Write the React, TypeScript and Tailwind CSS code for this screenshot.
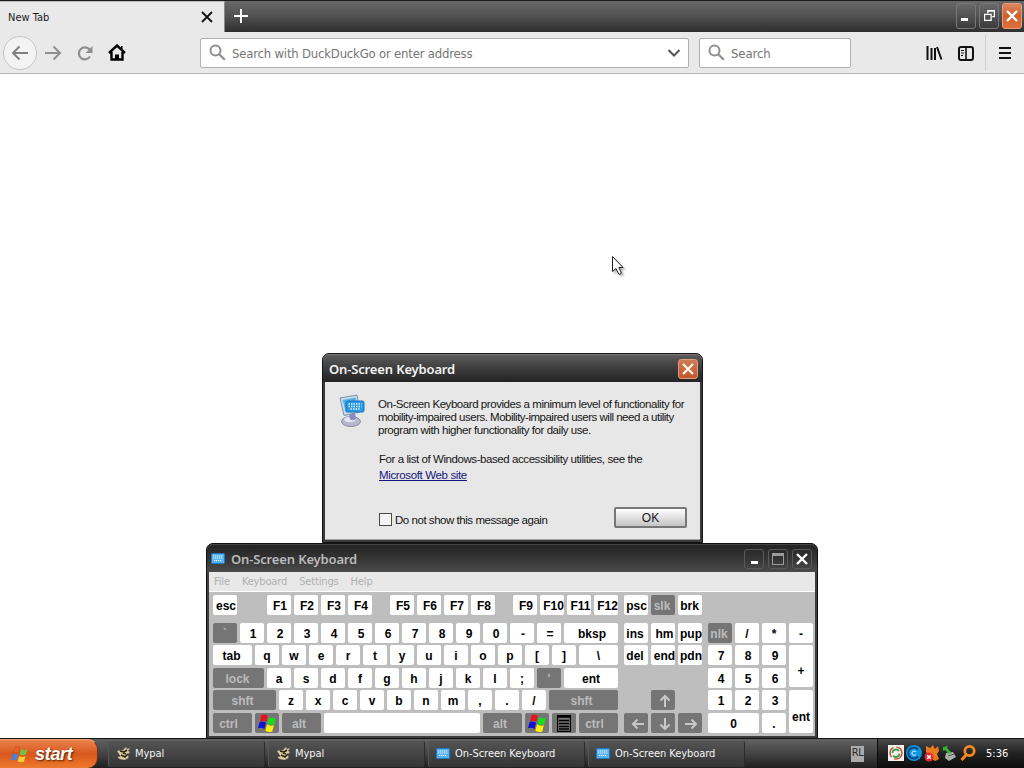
import type { ReactNode } from "react";
import { clsx } from "clsx";

const UI_FONT = "font-['DejaVu_Sans_Condensed','DejaVu_Sans',sans-serif]";
const TITLE_FONT = "font-['Noto_Sans','Open_Sans',sans-serif]";
const DIALOG_FONT = "font-['Liberation_Sans',Arial,sans-serif]";

interface KeyProps {
  children?: ReactNode;
  w?: string;
  h?: string;
  dark?: boolean;
  ml?: string;
  nudge?: string;
}

function Key({ children, w = "w-6", h = "h-5", dark, ml, nudge }: KeyProps) {
  return (
    <div
      className={clsx(
        "flex shrink-0 items-center justify-center overflow-hidden rounded-[2px] pt-[2px] text-[12px] leading-none font-bold whitespace-nowrap",
        dark ? "bg-[#757575] text-[#bcbcbc]" : "bg-white text-black",
        w,
        h,
        ml,
      )}
    >
      <span className={nudge}>{children}</span>
    </div>
  );
}

function Row({ children, className }: { children: ReactNode; className?: string }) {
  return <div className={clsx("flex h-5 gap-[3px]", className)}>{children}</div>;
}

function WindowsFlag() {
  return (
    <svg width="20" height="19" viewBox="0 0 20 19" className="mb-[2px] block">
      <path d="M4.500 1C6.500 0 8.500.300 10.800 1.800L9.300 8C7 6.500 5 6.500 3 7.300z" fill="#e8141c" />
      <path d="M12 3c2 1.400 4 1.600 6.800.8L17.300 10.300c-2.600.9-4.700.6-6.800-.8z" fill="#19dc19" />
      <path d="M2.600 8.200c2-1 4.200-.8 6.400.6L7.400 15C5.200 13.600 3.200 13.500 1 14.300z" fill="#1010d8" />
      <path d="M10 10.300c2.200 1.500 4.300 1.700 6.800.9L15.300 17.500c-2.500 1-4.700.7-6.900-.8z" fill="#fff200" />
    </svg>
  );
}

function Arrow({ rotate }: { rotate?: string }) {
  return (
    <svg width="14" height="14" viewBox="0 0 14 14" className={clsx("block", rotate)}>
      <path d="M13 7H2M6.500 2.500 2 7l4.500 4.500" fill="none" stroke="#c8c8c8" strokeWidth="2" />
    </svg>
  );
}

function KeyboardGlyph({ className }: { className?: string }) {
  return (
    <svg width="14" height="11" viewBox="0 0 14 11" className={className}>
      <rect x=".5" y=".5" width="13" height="10" rx="1" fill="#55b4ee" stroke="#1f78c4" />
      <path d="M2 3h10M2 5h10M3 7.500h8" stroke="#e4f6ff" strokeWidth="1.200" strokeDasharray="1.300 .7" />
    </svg>
  );
}

function MagnifierIcon() {
  return (
    <svg width="17" height="17" viewBox="0 0 17 17" className="shrink-0">
      <circle cx="6.500" cy="6.500" r="5" fill="none" stroke="#8f8f8f" strokeWidth="2" />
      <path d="m10.200 10.200 5.600 5.600" stroke="#8f8f8f" strokeWidth="2.200" />
    </svg>
  );
}

function Chrome({ children, className }: { children: ReactNode; className: string }) {
  return (
    <div className={clsx("flex items-center justify-center rounded-[3px] border", className)}>{children}</div>
  );
}

function CrossIcon({ size = 12, color = "#fff", width = 2.4 }: { size?: number; color?: string; width?: number }) {
  return (
    <svg width={size} height={size} viewBox="0 0 12 12">
      <path d="m1 1 10 10M11 1 1 11" stroke={color} strokeWidth={width} />
    </svg>
  );
}

function Browser() {
  return (
    <div className={clsx("flex flex-1 flex-col bg-white", UI_FONT)}>
      <div className="flex h-8 border-t border-[#1c1c1c] bg-linear-to-b from-[#696969] via-[#505050] to-[#2e2e2e]">
        <div className="flex w-[225px] items-center justify-between border-t border-r border-[#b9b9b9] border-r-[#8a8a8a] bg-[#e9e9e9] pr-[11px] pl-2">
          <span className="pt-[2px] text-[11px] text-[#1c1c1c]">New Tab</span>
          <CrossIcon color="#111" width={1.8} />
        </div>
        <svg width="16" height="16" viewBox="0 0 16 16" className="mt-[7px] ml-2">
          <path d="M8 1v14M1 8h14" stroke="#fff" strokeWidth="2" />
        </svg>
        <div className="mt-[2px] ml-auto flex h-[26px] gap-[3px] pr-[2px]">
          <Chrome className="w-5 border-[#777] bg-linear-to-b from-[#6a6a6a] to-[#3c3c3c]">
            <div className="mt-[6px] mr-1 h-[3px] w-[7px] bg-white" />
          </Chrome>
          <Chrome className="w-5 border-[#777] bg-linear-to-b from-[#6a6a6a] to-[#3c3c3c]">
            <svg width="11" height="11" viewBox="0 0 10 10" fill="none" stroke="#fff" className="mb-px">
              <path d="M.5 4v5.500h6V4M0 4h7M3.500 3V.5h6v5.500H7.500M3 1h7" strokeWidth="1.200" />
            </svg>
          </Chrome>
          <Chrome className="w-5 border-[#e79a78] bg-linear-to-b from-[#dc8660] via-[#cf5f2f] to-[#e0713a]">
            <CrossIcon size={12} />
          </Chrome>
        </div>
      </div>

      <div className="flex h-[42px] items-center border-b border-[#b5b5b5] bg-[#e9e9e9] pl-[3px]">
        <div className="flex size-[34px] items-center justify-center rounded-full border border-[#c4c4c4] bg-[#f3f3f3]">
          <svg width="18" height="16" viewBox="0 0 18 16" fill="none" stroke="#808080" strokeWidth="2">
            <path d="M17 8H2M8.500 1.500 2 8l6.500 6.500" />
          </svg>
        </div>
        <svg width="18" height="16" viewBox="0 0 18 16" fill="none" stroke="#8f8f8f" strokeWidth="2" className="ml-[7px]">
          <path d="M1 8h15M9.500 1.500 16 8l-6.500 6.500" />
        </svg>
        <svg width="16" height="16" viewBox="0 0 16 16" fill="none" stroke="#8f8f8f" strokeWidth="2.200" className="ml-[15px]">
          <path d="M13 11.500A6 6 0 1 1 12.500 4.500" />
          <path d="M15.500 1v7h-7z" fill="#8f8f8f" stroke="none" />
        </svg>
        <svg width="18" height="17" viewBox="0 0 18 17" className="ml-[15px]">
          <path d="M3.500 8v7.500h11V8M1 9l8-7.500L17 9" fill="none" stroke="#000" strokeWidth="2.400" />
          <path d="M7 16v-5.500h4V16z" fill="#000" />
          <path d="M13 2h1.500v3H13z" fill="#000" />
        </svg>
        <div className="ml-[74px] flex h-[30px] w-[489px] items-center rounded-[2px] border border-[#b0b0b0] bg-white pr-[7px] pl-2">
          <MagnifierIcon />
          <span className="ml-[6px] pt-[2px] text-[13px] tracking-[-0.2px] text-[#757575]">Search with DuckDuckGo or enter address</span>
          <svg width="14" height="10" viewBox="0 0 14 10" className="ml-auto">
            <path d="m1.500 2 5.500 5.500L12.500 2" fill="none" stroke="#555" strokeWidth="2" />
          </svg>
        </div>
        <div className="ml-[10px] flex h-[30px] w-[152px] items-center rounded-[2px] border border-[#b0b0b0] bg-white pl-2">
          <MagnifierIcon />
          <span className="ml-[6px] pt-[2px] text-[13px] tracking-[-0.1px] text-[#757575]">Search</span>
        </div>
        <svg width="17" height="16" viewBox="0 0 17 16" className="ml-[75px]" stroke="#111" strokeWidth="2">
          <path d="M1.500 1v14M5.500 3v12M9 3v12M11 2l4.500 12.500" />
        </svg>
        <svg width="16" height="15" viewBox="0 0 16 15" className="mt-px ml-[15px]" fill="none" stroke="#111">
          <rect x="1" y="1" width="14" height="13" rx="2" strokeWidth="2" />
          <path d="M8 1v13" strokeWidth="1.600" />
          <path d="M3 4.500h3M3 7h3M3 9.500h2" strokeWidth="1" />
        </svg>
        <div className="ml-[11px] h-9 w-px bg-[#cfcfcf]" />
        <div className="ml-[13px] flex w-[12px] flex-col gap-[3px]">
          <div className="h-[2px] bg-[#111]" />
          <div className="h-[2px] bg-[#111]" />
          <div className="h-[2px] bg-[#111]" />
        </div>
      </div>
    </div>
  );
}

function Dialog() {
  return (
    <div className="absolute top-[353px] left-[322px] flex h-[190px] w-[381px] flex-col rounded-t-[7px] border border-[#151515] bg-[#3b3b3b]">
      <div className="flex h-[28px] items-center justify-between rounded-t-[6px] border-t border-[#777] bg-linear-to-b from-[#5c5c5c] via-[#3d3d3d] to-[#232323] pr-1 pl-[6px]">
        <span className={clsx("pt-[2px] text-[13px] font-semibold tracking-[-0.15px] text-[#f2f2f2]", TITLE_FONT)}>On-Screen Keyboard</span>
        <Chrome className="h-5 w-5 border-[#e39b7c] bg-linear-to-b from-[#cf7a56] to-[#c2572c]">
          <CrossIcon color="#fff6e6" />
        </Chrome>
      </div>
      <div className={clsx("mx-[2px] mb-[2px] flex-1 border-b border-[#a0a0a0] bg-[#e7e7e7] pt-[16px] text-[11.5px] leading-[13px] text-[#151515]", DIALOG_FONT)}>
        <div className="flex">
          <svg width="30" height="34" viewBox="0 0 30 34" className="mt-[-4px] ml-[14px]">
            <ellipse cx="12" cy="27.500" rx="9.500" ry="5" fill="#b9b7cf" stroke="#8b89a8" />
            <ellipse cx="11" cy="25.500" rx="6" ry="2.800" fill="#e6e4f2" />
            <path d="m10 20 6-1 1 6c-2 1.500-4 1.500-6 .5z" fill="#8d8bc0" />
            <path d="m1 4 17-3 3 17-16 3.500z" fill="#c9dcea" stroke="#7893ab" />
            <path d="m3.500 6 13-2.500L19 16 7 18.500z" fill="#57aeea" />
            <rect x="7" y="7" width="18" height="11" rx="1.500" fill="#2b9ae6" stroke="#1375c0" />
            <path d="M9.500 10h13M9.500 12.500h13M11.500 15h9" stroke="#d9f3ff" strokeWidth="1.400" strokeDasharray="1.500 1" />
          </svg>
          <div className="ml-[9px] whitespace-nowrap">
            <p className="tracking-[-0.44px]">On-Screen Keyboard provides a minimum level of functionality for</p>
            <p className="tracking-[-0.5px]">mobility-impaired users. Mobility-impaired users will need a utility</p>
            <p className="tracking-[-0.44px]">program with higher functionality for daily use.</p>
            <p className="mt-4 ml-px tracking-[-0.43px]">For a list of Windows-based accessibility utilities, see the</p>
            <p className="mt-[3px] ml-px tracking-[-0.36px] text-[#14147c] underline">Microsoft Web site</p>
          </div>
        </div>
        <div className="mt-[25px] flex items-center pr-[13px] pl-[54px]">
          <div className="mt-1 size-[13px] border border-[#4a4a4a] bg-[#f4f4f4]" />
          <span className="mt-[6px] ml-[3px] tracking-[-0.46px]">Do not show this message again</span>
          <div className="ml-auto flex h-[21px] w-[73px] items-center justify-center rounded-[2px] border-2 border-[#777] bg-linear-to-b from-white to-[#c4c4c4] pt-px text-[12px]">OK</div>
        </div>
      </div>
    </div>
  );
}

function OnScreenKeyboard() {
  return (
    <div className="absolute top-[543px] left-[206px] flex h-[196px] w-[612px] flex-col rounded-t-[7px] border border-[#111] bg-[#3d3d3d]">
      <div className="flex h-[28px] items-center rounded-t-[6px] border-t border-[#444] bg-linear-to-b from-[#242424] via-[#343434] to-[#4b4b4b] pr-[5px] pl-1">
        <KeyboardGlyph />
        <span className={clsx("ml-[6px] pt-[2px] text-[13px] font-semibold tracking-[-0.15px] text-[#b9b9b9]", TITLE_FONT)}>On-Screen Keyboard</span>
        <div className="ml-auto flex gap-1">
          <Chrome className="h-5 w-5 border-[#595959]">
            <div className="mt-2 h-[3px] w-[7px] bg-white" />
          </Chrome>
          <Chrome className="h-5 w-5 border-[#595959]">
            <div className="h-[12px] w-[12px] border border-t-[3px] border-[#9b9b9b]" />
          </Chrome>
          <Chrome className="h-5 w-5 border-[#595959]">
            <CrossIcon />
          </Chrome>
        </div>
      </div>
      <div className={clsx("mx-[2px] flex h-5 items-center gap-3 border-b border-white bg-[#e8e8e8] pt-[2px] pl-[5px] text-[11px] tracking-[-0.15px] text-[#b0b0b0]", UI_FONT)}>
        <span>File</span>
        <span>Keyboard</span>
        <span>Settings</span>
        <span>Help</span>
      </div>

      <div className={clsx("mx-[2px] flex h-[144px] bg-[#bebebe] pt-[3px] pl-1", DIALOG_FONT)}>
        <div className="w-[405px]">
          <Row>
            <Key nudge="ml-[2px]">esc</Key>
            <Key ml="ml-[27px]" nudge="ml-[2px]">F1</Key>
            <Key nudge="ml-[2px]">F2</Key>
            <Key nudge="ml-[2px]">F3</Key>
            <Key nudge="ml-[2px]">F4</Key>
            <Key ml="ml-[15px]" nudge="ml-[2px]">F5</Key>
            <Key nudge="ml-[2px]">F6</Key>
            <Key nudge="ml-[2px]">F7</Key>
            <Key nudge="ml-[2px]">F8</Key>
            <Key ml="ml-[15px]" nudge="ml-[2px]">F9</Key>
            <Key nudge="ml-[3px]">F10</Key>
            <Key nudge="ml-[3px]">F11</Key>
            <Key nudge="ml-[3px]">F12</Key>
          </Row>
          <Row className="mt-2">
            <Key dark>`</Key>
            {["1", "2", "3", "4", "5", "6", "7", "8", "9", "0", "-", "="].map((k) => (
              <Key key={k} nudge="ml-[2px]">{k}</Key>
            ))}
            <Key w="w-[54px]" nudge="ml-[2px]">bksp</Key>
          </Row>
          <Row className="mt-[2px]">
            <Key w="w-[39px]" nudge="mr-[2px]">tab</Key>
            {["q", "w", "e", "r", "t", "y", "u", "i", "o", "p", "[", "]"].map((k) => (
              <Key key={k}>{k}</Key>
            ))}
            <Key w="w-[39px]">\</Key>
          </Row>
          <Row className="mt-[3px]">
            <Key dark w="w-[51px]" nudge="mr-[2px]">lock</Key>
            {["a", "s", "d", "f", "g", "h", "j", "k", "l", ";"].map((k) => (
              <Key key={k}>{k}</Key>
            ))}
            <Key dark>'</Key>
            <Key w="w-[54px]">ent</Key>
          </Row>
          <Row className="mt-[2px]">
            <Key dark w="w-[63px]" nudge="mr-1">shft</Key>
            {["z", "x", "c", "v", "b", "n", "m", ",", ".", "/"].map((k) => (
              <Key key={k}>{k}</Key>
            ))}
            <Key dark w="w-[69px]" nudge="mr-1">shft</Key>
          </Row>
          <Row className="mt-[3px]">
            <Key dark w="w-[39px]" nudge="mr-2">ctrl</Key>
            <Key dark><WindowsFlag /></Key>
            <Key dark w="w-[39px]" nudge="mr-[5px]">alt</Key>
            <Key w="w-[156px]" />
            <Key dark w="w-[39px]" nudge="mr-[5px]">alt</Key>
            <Key dark><WindowsFlag /></Key>
            <Key dark>
              <svg width="14" height="17" viewBox="0 0 14 17" className="mb-px block">
                <path d="M.5.5h13v16H.5zM1 2h12M2 5.500h10M2 8.500h10M2 11.500h10M2 14h10" fill="none" stroke="#000" strokeWidth="1.300" />
              </svg>
            </Key>
            <Key dark w="w-[39px]" nudge="mr-2">ctrl</Key>
          </Row>
        </div>

        <div className="ml-[6px] w-[78px]">
          <Row>
            <Key nudge="ml-px">psc</Key>
            <Key dark nudge="mr-[2px]">slk</Key>
            <Key nudge="mr-px">brk</Key>
          </Row>
          <Row className="mt-2">
            <Key nudge="mr-[2px]">ins</Key>
            <Key nudge="ml-[3px]">hm</Key>
            <Key nudge="ml-[2px]">pup</Key>
          </Row>
          <Row className="mt-[2px]">
            <Key nudge="mr-[2px]">del</Key>
            <Key nudge="ml-[3px]">end</Key>
            <Key nudge="ml-[2px]">pdn</Key>
          </Row>
          <Row className="mt-[25px]">
            <Key dark ml="ml-[27px]" nudge="ml-1"><Arrow rotate="rotate-90" /></Key>
          </Row>
          <Row className="mt-[3px]">
            <Key dark nudge="ml-1"><Arrow /></Key>
            <Key dark nudge="ml-1"><Arrow rotate="-rotate-90" /></Key>
            <Key dark nudge="ml-px"><Arrow rotate="rotate-180" /></Key>
          </Row>
        </div>

        <div className="mt-7 ml-[6px] w-[78px]">
          <Row>
            <Key dark nudge="mr-[2px]">nlk</Key>
            <Key>/</Key>
            <Key>*</Key>
          </Row>
          <Row className="mt-[2px]">
            <Key nudge="ml-[2px]">7</Key>
            <Key nudge="ml-[2px]">8</Key>
            <Key nudge="ml-[2px]">9</Key>
          </Row>
          <Row className="mt-[3px]">
            <Key nudge="ml-[2px]">4</Key>
            <Key nudge="ml-[2px]">5</Key>
            <Key nudge="ml-[2px]">6</Key>
          </Row>
          <Row className="mt-[2px]">
            <Key nudge="ml-[2px]">1</Key>
            <Key nudge="ml-[2px]">2</Key>
            <Key nudge="ml-[2px]">3</Key>
          </Row>
          <Row className="mt-[3px]">
            <Key w="w-[51px]">0</Key>
            <Key>.</Key>
          </Row>
        </div>
        <div className="mt-7 ml-[3px] flex w-6 flex-col">
          <Key>-</Key>
          <div className="mt-[2px]">
            <Key h="h-[42px]" nudge="mt-2">+</Key>
          </div>
          <div className="mt-[3px]">
            <Key h="h-[43px]" nudge="mt-2">ent</Key>
          </div>
        </div>
      </div>
    </div>
  );
}

function BirdIcon() {
  return (
    <svg width="15" height="13" viewBox="0 0 15 13">
      <path d="M1 4c3-1 4 0 6-1l3-3 1 2 3-1-2 3 2 1-2 2 .5 4-4 2-5-1-2-2 3-.5L3 7z" fill="#d8cda0" />
      <path d="m4 4 4 1 3-2M5 8l4 2 3-3M7 6l3 1" stroke="#2a2415" strokeWidth="1.700" fill="none" />
    </svg>
  );
}

function TaskButton({ icon, label }: { icon: ReactNode; label: string }) {
  return (
    <div className="flex h-[26px] w-[157px] items-center gap-1 rounded-[2px] border-r border-l border-[#2b2b2b] border-l-[#555] bg-linear-to-b from-[#545454] to-[#353535] pl-[7px] text-[11px] tracking-[-0.05px] text-[#f4f4f4]">
      {icon}
      <span className="pt-px">{label}</span>
    </div>
  );
}

function Taskbar() {
  return (
    <div className={clsx("flex h-[30px] items-center border-t border-[#111] bg-linear-to-b from-[#626262] via-[#444] to-[#1f1f1f]", UI_FONT)}>
      <div className="flex h-[29px] w-[98px] items-center rounded-r-[10px] border-t border-r border-[#f3a171] border-r-[#7c2e0a] bg-linear-to-b from-[#e9824b] via-[#d9571b] to-[#ee7a2e] pl-[10px]">
        <svg width="19" height="17" viewBox="0 0 19 17">
          <path d="M5 1.500c2-1 4-1 5 .2L8.500 7.500C7 6.500 5 6.500 3 7.500z" fill="#e8622c" stroke="#b8431a" strokeWidth=".5" />
          <path d="M11 3c2 1.200 4 1.200 6.500 0L16 8.500c-2.500 1.200-4.500 1-6.500-.2z" fill="#74c043" />
          <path d="M2.500 8.500c2-1 4-1 5.500.2L6.500 14.500C5 13.500 3 13.500.8 14.500z" fill="#4b82de" />
          <path d="M9.200 10c2 1.200 4 1.200 6.300 0L14 15.500c-2.500 1.200-4.500 1-6.300-.2z" fill="#f8ce33" />
        </svg>
        <span className={clsx("ml-[6px] text-[18px] font-bold tracking-[-0.3px] text-white italic [text-shadow:1px_1px_2px_#5a2000]", DIALOG_FONT)}>start</span>
      </div>
      <div className="ml-[10px] flex gap-[3px]">
        <TaskButton icon={<BirdIcon />} label="Mypal" />
        <TaskButton icon={<BirdIcon />} label="Mypal" />
        <TaskButton icon={<KeyboardGlyph className="mr-[1px]" />} label="On-Screen Keyboard" />
        <TaskButton icon={<KeyboardGlyph className="mr-[1px]" />} label="On-Screen Keyboard" />
      </div>
      <div className="ml-auto flex h-4 w-[13px] items-center justify-center bg-[#ababab] text-[11px] tracking-[-0.5px] text-[#2b2b2b]">RL</div>
      <div className="ml-[13px] flex h-[29px] w-[147px] items-center border-l border-[#0c0c0c] bg-linear-to-b from-[#4a4a4a] via-[#222] to-[#0c0c0c] pl-[10px]">
        <svg width="90" height="18" viewBox="0 0 90 18" fill="none" className="mb-px shrink-0">
          <rect x="0" y="1" width="16" height="16" fill="#f3f3ec" />
          <circle cx="8" cy="9" r="6" stroke="#cc5744" strokeWidth="1.600" strokeDasharray="11 3" />
          <path d="M4.500 9A3.600 3.600 0 0 1 11 7M11.500 9.500A3.600 3.600 0 0 1 5 11.500" stroke="#38a04a" strokeWidth="1.800" />
          <circle cx="26" cy="9" r="8" fill="#1495dc" />
          <path d="M30 5.500a5.500 5.500 0 1 0 0 7" stroke="#064b8c" strokeWidth="2" />
          <path d="M28 8a2.200 2.200 0 1 0 0 2.500" stroke="#a8e2ff" strokeWidth="1.200" />
          <path d="m38 2 4 2 3-3 2 4 3-3 1 5-2 3 2 5-4 2-3-2-5 2 1-6-2-3z" fill="#ec7a1b" />
          <circle cx="41" cy="13" r="4.500" fill="#df2c38" />
          <path d="m39.200 11.200 3.600 3.600m0-3.600-3.600 3.600" stroke="#fff" strokeWidth="1.300" />
          <path d="m58 9 7-1 3 5-7 4-4-3z" fill="#a9b0a7" />
          <path d="m60 12 6-2" stroke="#505850" />
          <path d="m55 3 5-1-1 2 4 4-2 2-4-4-2 1z" fill="#39ae36" />
          <circle cx="81.500" cy="7" r="4.700" stroke="#f18a1f" strokeWidth="2.800" />
          <path d="m78.500 10.500-5 5.500" stroke="#f18a1f" strokeWidth="3" />
        </svg>
        <span className="ml-[8px] pt-px text-[11px] text-white">5:36</span>
      </div>
    </div>
  );
}

export default function App() {
  return (
    <div className="relative flex h-[768px] w-[1024px] flex-col overflow-hidden bg-white">
      <Browser />
      <Taskbar />
      <Dialog />
      <OnScreenKeyboard />
      <svg width="16" height="22" viewBox="0 0 16 22" className="absolute top-[255px] left-[611px] drop-shadow-[2px_2px_1px_rgba(0,0,0,0.3)]">
        <path d="M1.500 1.500v15l3.500-3 3 6 2.500-1.300-2.700-5.700h4.200z" fill="#fff" stroke="#222" />
      </svg>
    </div>
  );
}
